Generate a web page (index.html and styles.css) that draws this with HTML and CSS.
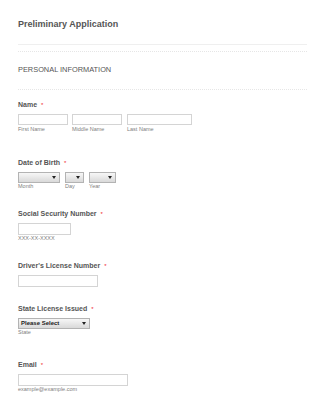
FILE: index.html
```html
<!DOCTYPE html>
<html>
<head>
<meta charset="utf-8">
<link rel="stylesheet" href="styles.css">
</head>
<body>
<div class="page">
  <h1 class="title">Preliminary Application</h1>
  <div class="rule"></div>
  <div class="rule-dotted rule-dotted--first"></div>
  <h2 class="section">PERSONAL INFORMATION</h2>
  <div class="rule-dotted rule-dotted--second"></div>

  <div class="field field--name">
    <div class="label">Name<span class="req">*</span></div>
    <div class="row">
      <div class="col"><div class="input w-first"></div><div class="sub sub--gap">First Name</div></div>
      <div class="col col--g4"><div class="input w-first"></div><div class="sub sub--gap">Middle Name</div></div>
      <div class="col col--g5"><div class="input w-last"></div><div class="sub sub--gap">Last Name</div></div>
    </div>
  </div>

  <div class="field field--dob">
    <div class="label">Date of Birth<span class="req">*</span></div>
    <div class="row">
      <div class="col"><div class="select w-month"><span class="arrow"></span></div><div class="sub">Month</div></div>
      <div class="col col--g5"><div class="select w-day"><span class="arrow"></span></div><div class="sub">Day</div></div>
      <div class="col col--g5"><div class="select w-year"><span class="arrow"></span></div><div class="sub">Year</div></div>
    </div>
  </div>

  <div class="field field--ssn">
    <div class="label">Social Security Number<span class="req">*</span></div>
    <div class="input input--tall w-ssn"></div>
    <div class="sub">XXX-XX-XXXX</div>
  </div>

  <div class="field field--dl">
    <div class="label">Driver's License Number<span class="req">*</span></div>
    <div class="input input--tall w-dl"></div>
  </div>

  <div class="field field--state">
    <div class="label">State License Issued<span class="req">*</span></div>
    <div class="select w-state"><span class="select-text">Please Select</span><span class="arrow"></span></div>
    <div class="sub">State</div>
  </div>

  <div class="field field--email">
    <div class="label">Email<span class="req">*</span></div>
    <div class="input input--tall w-email"></div>
    <div class="sub">example@example.com</div>
  </div>
</div>
</body>
</html>
```
FILE: styles.css
```css
html, body {
  margin: 0;
  padding: 0;
  background: #ffffff;
}
body {
  font-family: "Liberation Sans", Arial, sans-serif;
  color: #555555;
}
.page {
  width: 289px;
  padding: 17px 18px 0 18px;
}
.title {
  margin: 0;
  font-size: 9px;
  line-height: 14px;
  font-weight: bold;
  color: #555555;
}
.rule {
  margin-top: 13px;
  height: 1px;
  background: #efefef;
}
.rule-dotted {
  height: 0;
  border-top: 1px dotted #e6e6e6;
}
.rule-dotted--first { margin-top: 6px; }
.rule-dotted--second { margin-top: 14px; }
.section {
  margin: 13px 0 0 0;
  font-size: 7.4px;
  line-height: 10px;
  font-weight: normal;
  color: #555555;
}
.field--name { margin-top: 10px; }
.field--dob { margin-top: 25px; }
.field--ssn { margin-top: 19px; }
.field--dl { margin-top: 19px; }
.field--state { margin-top: 17px; }
.field--email { margin-top: 24px; }

.label {
  font-size: 7px;
  line-height: 9px;
  font-weight: bold;
  color: #555555;
  margin-bottom: 4px;
  white-space: nowrap;
}
.req {
  color: #f0262b;
  margin-left: 4px;
  font-size: 6px;
  font-weight: normal;
}
.row {
  display: flex;
}
.col--g4 { margin-left: 4px; }
.col--g5 { margin-left: 5px; }
.input {
  box-sizing: border-box;
  height: 11px;
  border: 1px solid #d4d4d4;
  background: #ffffff;
}
.input--tall { height: 12px; }
.select {
  box-sizing: border-box;
  height: 11px;
  border: 1px solid #b3b3b3;
  background: linear-gradient(#f7f7f7, #d9d9d9);
  display: flex;
  align-items: center;
  justify-content: space-between;
  padding: 0 3px 0 2px;
}
.arrow {
  margin-left: auto;
  width: 0;
  height: 0;
  border-left: 2px solid transparent;
  border-right: 2px solid transparent;
  border-top: 3px solid #222222;
}
.select-text {
  font-size: 6px;
  line-height: 9px;
  font-weight: bold;
  color: #222222;
}
.sub {
  font-size: 5.5px;
  line-height: 7px;
  color: #808080;
  white-space: nowrap;
}
.sub--gap { margin-top: 1px; }

.w-first { width: 50px; }
.w-last { width: 65px; }
.w-month { width: 42px; }
.w-day { width: 19px; }
.w-year { width: 27px; }
.w-ssn { width: 53px; }
.w-dl { width: 80px; }
.w-state { width: 72px; }
.w-email { width: 110px; }
```
